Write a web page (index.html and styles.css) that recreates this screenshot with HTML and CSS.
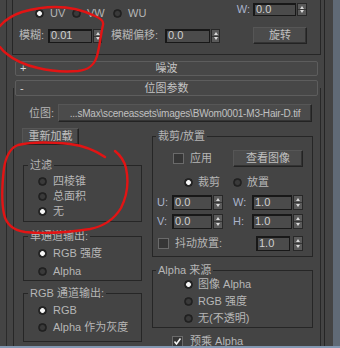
FILE: index.html
```html
<!DOCTYPE html>
<html>
<head>
<meta charset="utf-8">
<link rel="stylesheet" href="styles.css">
</head>
<body>
<div class="screen">
  <div class="content">
    <div class="outer">
      <div class="topbox">
        <div class="row1">
          <div class="radios">
            <span class="opt w37"><i class="radio on"></i>UV</span>
            <span class="opt w41"><i class="radio"></i>VW</span>
            <span class="opt"><i class="radio"></i>WU</span>
          </div>
          <div class="numctl">
            <span class="axis lw">W:</span><span class="field f43">0.0</span><span class="spin"></span>
          </div>
        </div>
        <div class="row2">
          <span class="lbl l29">模糊:</span><span class="field f44">0.01</span><span class="spin"></span>
          <span class="lbl l54">模糊偏移:</span><span class="field f45">0.0</span><span class="spin"></span>
          <span class="btn b-rot">旋转</span>
        </div>
      </div>

      <div class="bar bar1"><span class="sign">+</span><span class="bar-title">噪波</span></div>

      <div class="rollout">
        <div class="bar bar2"><span class="sign">-</span><span class="bar-title">位图参数</span></div>
        <div class="path-row">
          <span class="lbl l29">位图:</span>
          <span class="btn path">...sMax\sceneassets\images\BWom0001-M3-Hair-D.tif</span>
        </div>
        <div class="cols">
          <div class="col-left">
            <span class="btn b-reload">重新加载</span>
            <div class="group g-filter">
              <span class="title">过滤</span>
              <div class="opts o15">
                <span class="ropt"><i class="radio"></i>四棱锥</span>
                <span class="ropt"><i class="radio"></i>总面积</span>
                <span class="ropt"><i class="radio on"></i>无</span>
              </div>
            </div>
            <div class="group g-mono">
              <span class="title">单通道输出:</span>
              <div class="opts o18">
                <span class="ropt"><i class="radio on"></i>RGB 强度</span>
                <span class="ropt"><i class="radio"></i>Alpha</span>
              </div>
            </div>
            <div class="group g-rgb">
              <span class="title">RGB 通道输出:</span>
              <div class="opts o17">
                <span class="ropt"><i class="radio on"></i>RGB</span>
                <span class="ropt"><i class="radio"></i>Alpha 作为灰度</span>
              </div>
            </div>
          </div>

          <div class="col-right">
            <div class="group g-crop">
              <span class="title">裁剪/放置</span>
              <div class="rowA">
                <i class="check"></i><span class="cklabel">应用</span>
                <span class="btn b-view">查看图像</span>
              </div>
              <div class="rowB">
                <span class="opt w49"><i class="radio on"></i>裁剪</span>
                <span class="opt"><i class="radio"></i>放置</span>
              </div>
              <div class="rowC">
                <span class="axis l15">U:</span><span class="field f40">0.0</span><span class="spin"></span>
                <span class="axis l19">W:</span><span class="field f40">1.0</span><span class="spin"></span>
              </div>
              <div class="rowC rowD">
                <span class="axis l15">V:</span><span class="field f40">0.0</span><span class="spin"></span>
                <span class="axis l19">H:</span><span class="field f40">1.0</span><span class="spin"></span>
              </div>
              <div class="rowE">
                <i class="check"></i><span class="cklabel">抖动放置:</span>
                <span class="field f34">1.0</span><span class="spin sp3"></span>
              </div>
            </div>
            <div class="group g-alpha">
              <span class="title">Alpha 来源</span>
              <div class="opts o17 a-opts">
                <span class="ropt"><i class="radio on"></i>图像 Alpha</span>
                <span class="ropt"><i class="radio"></i>RGB 强度</span>
                <span class="ropt"><i class="radio"></i>无(不透明)</span>
              </div>
            </div>
            <div class="premul">
              <i class="check checked"><svg viewBox="0 0 11 11" width="11" height="11"><polyline points="2.5,5.5 4.5,8 8.5,2.5" fill="none" stroke="#f2f2f2" stroke-width="1.6"/></svg></i>
              <span class="cklabel">预乘 Alpha</span>
            </div>
          </div>
        </div>
      </div>
    </div>
    <div class="gutter"></div>
    <div class="strip"></div>
  </div>
  <div class="bottom"></div>
</div>

<svg class="marks" viewBox="0 0 340 348" width="340" height="348">
  <path d="M0 26 C5 20 13 15 22 12 C33 9 45 7 55 7 C70 7 85 11 95 16 C100 18 104 21 103 25 C101 33 100 45 97 56 C94 66 88 70 78 71 C65 72 50 71 38 68 C25 65 14 60 7 54 C4 52 2 50 0 47"/>
  <path d="M105 157 C95 150 85 146 70 144 C50 142 30 142 18 145 C10 148 6 156 4 168 C2 185 1 200 4 214 C6 224 12 230 25 232 C45 234 70 232 90 229 C105 226 115 218 121 208 C127 196 129 182 126 168 C124 160 120 155 115 151"/>
</svg>
</body>
</html>
```

FILE: styles.css
```css
* { box-sizing: border-box; margin: 0; padding: 0; }
html, body { width: 340px; height: 348px; overflow: hidden; background: #444444; }
body {
  position: relative;
  font-family: "Liberation Sans", "Noto Sans CJK SC", sans-serif;
  font-size: 11px;
  line-height: 13px;
  color: #b6b6b6;
}
i { font-style: normal; }

.screen { display: flex; flex-direction: column; width: 340px; height: 348px; }
.content { display: flex; height: 346px; overflow: hidden; }
.outer {
  display: flex; flex-direction: column;
  margin-left: 6px; width: 319px; flex: none;
  border-left: 1px solid #2b2b2b; border-right: 1px solid #252525;
}
.gutter { width: 8px; flex: none; }
.strip { width: 7px; flex: none; background: #606a76; }
.bottom { height: 2px; background: #8298b2; }

/* top group */
.topbox {
  flex: none;
  margin-left: 5px; width: 309px; height: 55px;
  border: 1px solid #262626; border-top: 0;
  padding-top: 3px;
}
.row1 {
  display: flex; justify-content: space-between; align-items: flex-start;
  height: 13px; padding: 0 13px 0 22px;
}
.radios { display: flex; margin-top: 5px; }
.opt { display: flex; align-items: center; gap: 6px; height: 11px; white-space: nowrap; }
.w37 { width: 37px; }
.w41 { width: 41px; }
.w49 { width: 49px; }
.numctl { display: flex; align-items: center; }
.axis { color: #a9b3cb; }
.lw { margin-right: 3px; }

.row2 {
  display: flex; align-items: center;
  height: 17px; margin-top: 11px; padding-left: 6px;
}
.lbl { flex: none; white-space: nowrap; }
.l29 { width: 29px; }
.l54 { width: 54px; margin-left: 9px; }
.l15 { width: 15px; flex: none; }
.l19 { width: 19px; flex: none; margin-left: 10px; }

/* numeric field + spinner */
.field {
  display: flex; align-items: center; flex: none;
  height: 14px; padding-left: 2px;
  background: #4b4b4b;
  border: 1px solid #181818;
  box-shadow: inset 1px 1px 0 #181818;
  color: #d0d0d0; line-height: 11px; white-space: nowrap;
}
.numctl .field { height: 13px; }
.f34 { width: 34px; margin-left: auto; }
.f40 { width: 40px; }
.f43 { width: 43px; }
.f44 { width: 44px; }
.f45 { width: 45px; }
.spin {
  display: flex; flex-direction: column; justify-content: space-evenly; align-items: center;
  flex: none; width: 9px; height: 14px; margin-left: 1px;
  background: linear-gradient(#5a5a5a 0 46%, #353535 46% 56%, #5a5a5a 56%);
  border: 1px solid #282828;
}
.numctl .spin { width: 10px; height: 13px; }
.rowC .spin, .rowE .spin { width: 10px; }
.sp3 { margin-left: 3px; }
.spin::before, .spin::after {
  content: ""; width: 0; height: 0;
  border-left: 2px solid transparent; border-right: 2px solid transparent;
}
.spin::before { border-bottom: 3px solid #dadada; }
.spin::after { border-top: 3px solid #dadada; }

/* buttons */
.btn {
  display: flex; align-items: center; justify-content: center; flex: none;
  height: 17px;
  background: #4b4b4b;
  border: 1px solid #232323;
  border-top-color: #565656; border-left-color: #565656;
  box-shadow: inset -1px -1px 0 #333333;
  color: #c0c0c0; white-space: nowrap; overflow: hidden;
}
.b-rot { width: 54px; margin-left: 33px; }
.b-reload { width: 57px; }
.b-view { width: 70px; margin-left: auto; }
.path {
  width: 254px; height: 18px;
  font-size: 10px; letter-spacing: -0.2px;
}

/* rollout bars */
.bar {
  display: grid; grid-template-columns: 20px 1fr 20px; align-items: center;
  flex: none;
  border: 1px solid #5d5d5d; border-radius: 2px;
  background: #474747;
}
.sign { padding-left: 4px; color: #d8d8d8; font-size: 11px; }
.bar-title { text-align: center; color: #c4c4c4; }
.bar1 { margin: 6px 0 0 8px; width: 303px; height: 15px; }

.rollout {
  flex: 1;
  margin: 12px 0 0 6px; width: 308px;
  border-left: 1px solid #272727; border-right: 1px solid #272727;
}
.bar2 { margin: -8px 0 0 1px; width: 303px; height: 16px; }

.path-row {
  display: flex; align-items: center;
  height: 18px; margin-top: 8px; padding-left: 15px;
}

.cols { display: flex; align-items: flex-start; margin-top: 6px; }
.col-left { display: flex; flex-direction: column; align-items: flex-start; margin-left: 8px; width: 121px; flex: none; }
.col-right { display: flex; flex-direction: column; margin-left: 9px; width: 161px; flex: none; }

/* group boxes */
.group { border: 1px solid #262626; width: 100%; }
.col-left .group { margin-left: 1px; width: 119px; }
.title {
  display: block; width: fit-content;
  height: 12px; line-height: 12px;
  margin: -7px 0 0 4px; padding: 0 2px;
  background: #444444; white-space: nowrap;
}
.g-crop .title, .g-alpha .title { margin-left: 3px; }

.opts { display: flex; flex-direction: column; }
.ropt { display: flex; align-items: center; gap: 6px; padding-left: 14px; white-space: nowrap; }
.o15 .ropt { height: 15px; }
.o18 .ropt { height: 18px; }
.o17 .ropt { height: 17px; }
.a-opts .ropt { padding-left: 31px; gap: 5px; }

.g-filter { margin-top: 20px; }
.g-filter .opts { margin-top: 3px; padding-bottom: 2px; }
.g-mono { margin-top: 14px; }
.g-mono .opts { margin-top: 2px; }
.g-rgb { margin-top: 12px; }
.g-rgb .opts { margin-top: 3px; padding-bottom: 5px; }

.g-crop { margin-top: 8px; padding-bottom: 5px; }
.g-alpha { margin-top: 13px; }

.rowA { display: flex; align-items: center; height: 17px; margin-top: 8px; padding: 0 9px 0 20px; }
.rowB { display: flex; align-items: center; height: 16px; margin-top: 7px; padding-left: 31px; }
.rowB .opt { gap: 5px; }
.rowC { display: flex; align-items: center; height: 15px; margin-top: 5px; padding-left: 4px; }
.rowC .field { height: 15px; }
.rowC .spin { height: 15px; }
.rowD { margin-top: 4px; }
.rowE { display: flex; align-items: center; height: 15px; margin-top: 7px; padding: 0 9px 0 5px; }
.rowE .field, .rowE .spin { height: 15px; }

.premul { display: flex; align-items: center; height: 11px; margin-top: 8px; padding-left: 20px; }

/* radio & checkbox */
.radio {
  display: block; flex: none;
  width: 9px; height: 9px; border-radius: 50%;
  background: radial-gradient(circle, #3a3a3a 0 2px, #242424 3px);
  border: 1px solid #1e1e1e;
}
.radio.on { background: radial-gradient(circle, #f6f6f6 0 2px, #2a2a2a 2.8px); }
.check {
  display: block; flex: none;
  width: 11px; height: 11px;
  background: #363636;
  border: 1px solid #6a6a6a;
}
.check svg { display: block; margin: -1px 0 0 -1px; }
.cklabel { margin-left: 6px; white-space: nowrap; }
.premul .cklabel { margin-left: 7px; line-height: 11px; }

/* red annotations */
.marks {
  position: absolute; left: 0; top: 0;
  pointer-events: none;
}
.marks path {
  fill: none; stroke: #e21414; stroke-width: 2.4; stroke-linecap: round; stroke-linejoin: round;
}
```
